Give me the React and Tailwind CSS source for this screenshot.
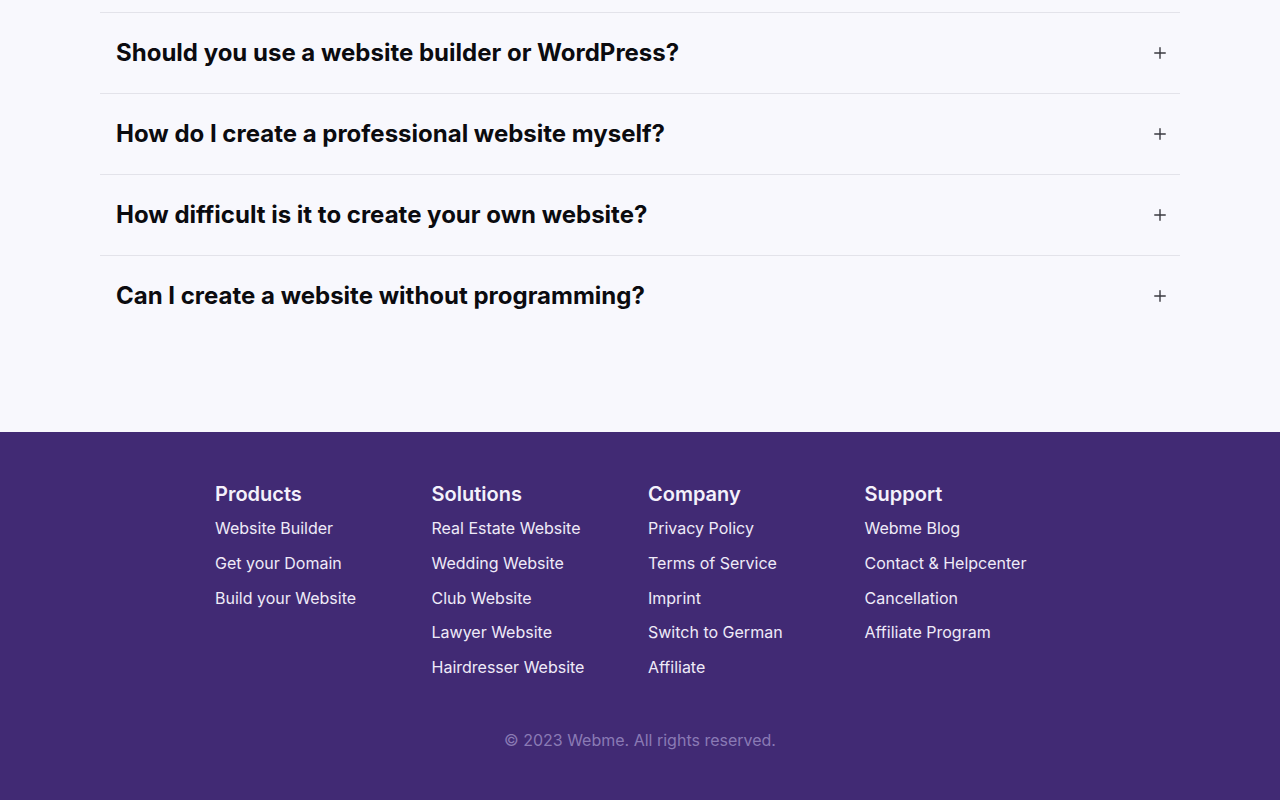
import React from "react";

const faqs = [
  "Should you use a website builder or WordPress?",
  "How do I create a professional website myself?",
  "How difficult is it to create your own website?",
  "Can I create a website without programming?",
];

const cols = [
  { title: "Products", links: ["Website Builder", "Get your Domain", "Build your Website"] },
  { title: "Solutions", links: ["Real Estate Website", "Wedding Website", "Club Website", "Lawyer Website", "Hairdresser Website"] },
  { title: "Company", links: ["Privacy Policy", "Terms of Service", "Imprint", "Switch to German", "Affiliate"] },
  { title: "Support", links: ["Webme Blog", "Contact & Helpcenter", "Cancellation", "Affiliate Program"] },
];

function Plus() {
  return (
    <svg width="12" height="12" viewBox="0 0 12 12" fill="none" stroke="#3a3a40" strokeWidth="1.4" strokeLinecap="round">
      <line x1="6" y1="0.75" x2="6" y2="11.25" />
      <line x1="0.75" y1="6" x2="11.25" y2="6" />
    </svg>
  );
}

export default function App() {
  return (
    <div className="min-h-[800px] bg-[#f8f8fd]" style={{ fontFamily: "Inter, 'Noto Sans', sans-serif" }}>
      <div className="pt-[12px] pb-[96px]">
        <div className="mx-[100px]">
          {faqs.map((q, i) => (
            <div key={i} className={"flex items-center justify-between pl-4 pr-[14px] py-6 border-t border-[#e3e3ea]"}>
              <span className="text-[24px] leading-8 font-bold text-[#0b0b0f]">{q}</span>
              <Plus />
            </div>
          ))}
        </div>
      </div>
      <footer className="bg-[#412a74] pt-12 pb-12">
        <div className="w-[850px] mx-auto grid grid-cols-4 gap-x-4">
          {cols.map((c) => (
            <div key={c.title}>
              <div className="text-[20px] leading-7 font-semibold text-[#f4f1fb]">{c.title}</div>
              <ul className="mt-[8px] flex flex-col gap-[10.75px]">
                {c.links.map((l) => (
                  <li key={l} className="text-[16px] leading-6 text-[#efeaf8]">{l}</li>
                ))}
              </ul>
            </div>
          ))}
        </div>
        <div className="mt-[49px] text-center text-[16px] leading-6 text-[#8a7ab5]">© 2023 Webme. All rights reserved.</div>
      </footer>
    </div>
  );
}
